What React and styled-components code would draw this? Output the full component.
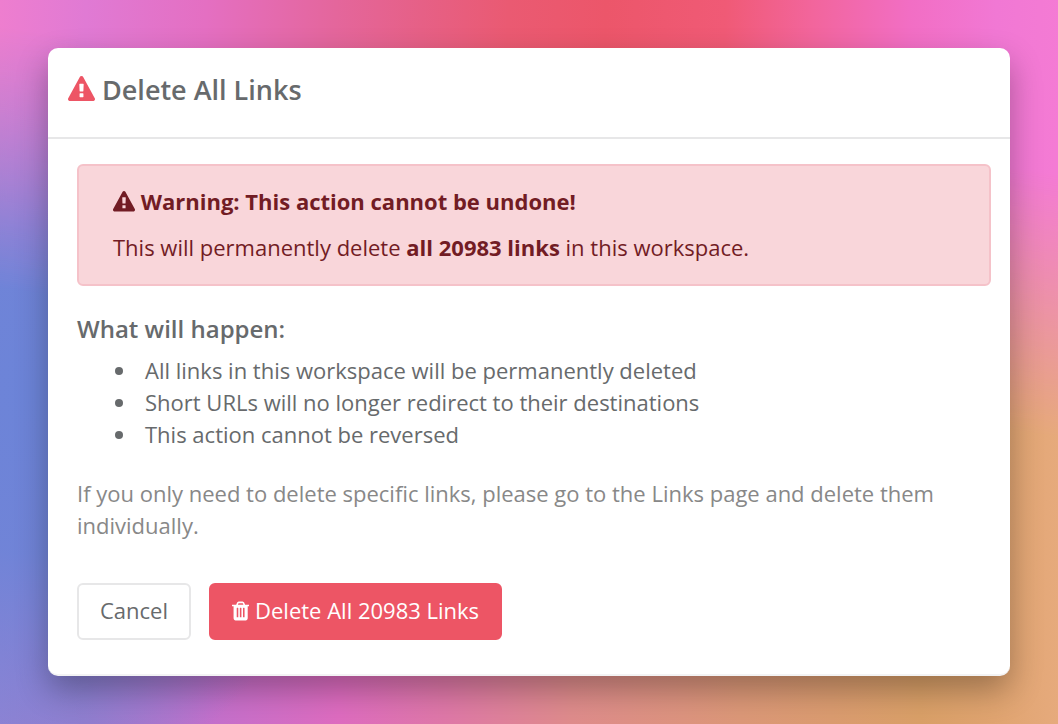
import React from 'react';
import styled, { createGlobalStyle, css } from 'styled-components';

const colors = {
  text: '#676a6c',
  muted: '#888888',
  danger: '#ed5565',
  alertText: '#721c24',
  alertBg: '#f9d6da',
  alertBorder: '#f5c2c9',
  line: '#e7e7e8',
  lineLight: '#f3f3f4',
  white: '#ffffff',
};

const fontSizes = {
  md: '22px',
  lg: '24px',
  xl: '27px',
};

const GlobalStyle = createGlobalStyle`
  *,
  *::before,
  *::after {
    box-sizing: border-box;
  }
  body {
    margin: 0;
    color: ${colors.text};
    font-family: 'Open Sans', 'Noto Sans', sans-serif;
    font-size: ${fontSizes.md};
    line-height: 32px;
  }
`;

const StyledBackdrop = styled.main`
  position: relative;
  isolation: isolate;
  display: flex;
  align-items: center;
  min-height: 100vh;
  padding: 48px;
  background: linear-gradient(
    92deg,
    #ee7ecf 0%,
    #e07ad4 8%,
    #e46fc2 19%,
    #e4669c 31%,
    #e66086 39%,
    #ea5a72 47%,
    #ec566a 56%,
    #f05a76 67%,
    #f2659c 75%,
    #f26ec4 84%,
    #f178d4 92%,
    #f57cd4 100%
  );

  /* the cooler half, faded in over the pink one from top to bottom */
  &::before {
    content: '';
    position: absolute;
    inset: 0;
    z-index: -1;
    background:
      radial-gradient(ellipse 30% 56% at 3% 54%, #6c84d8 0%, #6c84d8e6 40%, #6c84d800 100%),
      linear-gradient(
        90deg,
        #9682d2 0%,
        #9c7ccc 8%,
        #c470cc 20%,
        #de6cc0 32%,
        #df78a8 42%,
        #df8c8c 54%,
        #dc9878 70%,
        #daa068 87%,
        #e0a470 94%,
        #e6aa7c 100%
      );
    mask-image: linear-gradient(188deg, transparent 20%, #000 50%);
  }
`;
const StyledDialog = styled.section`
  width: 100%;
  border-bottom: 2px solid ${colors.lineLight};
  border-radius: 10px;
  background-color: ${colors.white};
  box-shadow: 0 14px 32px rgba(0, 0, 0, 0.3);
`;
const StyledHeader = styled.header`
  padding: 24px 20px 29px;
  border-bottom: 2px solid ${colors.line};
`;
const StyledTitle = styled.h1`
  margin: 0;
  font-size: ${fontSizes.xl};
  font-weight: 600;
  line-height: 36px;
`;
const StyledBody = styled.div`
  padding: 25px 19px 34px 29px;
`;
const StyledAlert = styled.div`
  padding: 19px 34px 21px;
  border: 2px solid ${colors.alertBorder};
  border-radius: 6px;
  background-color: ${colors.alertBg};
  color: ${colors.alertText};

  p {
    margin: 0 0 14px;
  }
  p:last-child {
    margin-bottom: 0;
  }
`;
const StyledSubtitle = styled.h2`
  margin: 27px 0 9px;
  font-size: ${fontSizes.lg};
  font-weight: 600;
  line-height: 32px;
`;
const StyledList = styled.ul`
  margin: 0;
  padding-left: 61px;

  li {
    padding-left: 7px;
  }
`;
const StyledNote = styled.p`
  margin: 27px 0 42px;
  color: ${colors.muted};
`;
const StyledActions = styled.div`
  display: flex;
  gap: 18px;
`;
const StyledButton = styled.button`
  padding: 9px 21px 11px;
  border: 2px solid ${colors.line};
  border-radius: 6px;
  background-color: ${colors.white};
  color: inherit;
  font: inherit;
  line-height: 33px;
  cursor: pointer;

  ${({ $danger }) =>
    $danger &&
    css`
      border-color: ${colors.danger};
      background-color: ${colors.danger};
      color: ${colors.white};
    `}
`;
const StyledIcon = styled.svg`
  height: 1em;
  width: auto;
  fill: ${({ $color }) => $color || 'currentColor'};
  vertical-align: -3px;
`;

const IconWarning = ({ color }) => (
  <StyledIcon viewBox="0 0 1792 1792" $color={color} aria-hidden="true">
    <path d="M1024 1375v-190q0-14-9.5-23.5t-22.5-9.5h-192q-13 0-22.5 9.5t-9.5 23.5v190q0 14 9.5 23.5t22.5 9.5h192q13 0 22.5-9.5t9.5-23.5zm-2-374l18-459q0-12-10-19-13-11-24-11h-220q-11 0-24 11-10 7-10 21l17 457q0 10 10 16.5t24 6.5h185q14 0 23.5-6.5t10.5-16.5zm-14-934l768 1408q35 63-2 126-17 29-46.5 46t-63.5 17h-1536q-34 0-63.5-17t-46.5-46q-37-63-2-126l768-1408q17-31 47-49t65-18 65 18 47 49z" />
  </StyledIcon>
);

const IconTrash = () => (
  <StyledIcon viewBox="192 0 1408 1792" aria-hidden="true">
    <path d="M704 1376v-704q0-14-9-23t-23-9h-64q-14 0-23 9t-9 23v704q0 14 9 23t23 9h64q14 0 23-9t9-23zm256 0v-704q0-14-9-23t-23-9h-64q-14 0-23 9t-9 23v704q0 14 9 23t23 9h64q14 0 23-9t9-23zm256 0v-704q0-14-9-23t-23-9h-64q-14 0-23 9t-9 23v704q0 14 9 23t23 9h64q14 0 23-9t9-23zm-544-992h448l-48-117q-7-9-17-11h-317q-10 2-17 11zm928 32v64q0 14-9 23t-23 9h-96v948q0 83-47 143.5t-113 60.5h-832q-66 0-113-58.5t-47-141.5v-952h-96q-14 0-23-9t-9-23v-64q0-14 9-23t23-9h309l70-167q15-37 54-63t79-26h320q40 0 79 26t54 63l70 167h309q14 0 23 9t9 23z" />
  </StyledIcon>
);

const consequences = [
  'All links in this workspace will be permanently deleted',
  'Short URLs will no longer redirect to their destinations',
  'This action cannot be reversed',
];

const App = () => {
  const linkCount = 20983;

  return (
    <>
      <GlobalStyle />
      <StyledBackdrop>
        <StyledDialog aria-labelledby="dialog-title">
          <StyledHeader>
            <StyledTitle id="dialog-title">
              <IconWarning color={colors.danger} /> Delete All Links
            </StyledTitle>
          </StyledHeader>
          <StyledBody>
            <StyledAlert role="alert">
              <p>
                <strong>
                  <IconWarning /> Warning: This action cannot be undone!
                </strong>
              </p>
              <p>
                This will permanently delete <strong>all {linkCount} links</strong> in this
                workspace.
              </p>
            </StyledAlert>
            <StyledSubtitle>What will happen:</StyledSubtitle>
            <StyledList>
              {consequences.map((consequence, i) => (
                <li key={i}>{consequence}</li>
              ))}
            </StyledList>
            <StyledNote>
              If you only need to delete specific links, please go to the Links page and delete them
              individually.
            </StyledNote>
            <StyledActions>
              <StyledButton type="button">Cancel</StyledButton>
              <StyledButton type="button" $danger>
                <IconTrash /> Delete All {linkCount} Links
              </StyledButton>
            </StyledActions>
          </StyledBody>
        </StyledDialog>
      </StyledBackdrop>
    </>
  );
};

export default App;
